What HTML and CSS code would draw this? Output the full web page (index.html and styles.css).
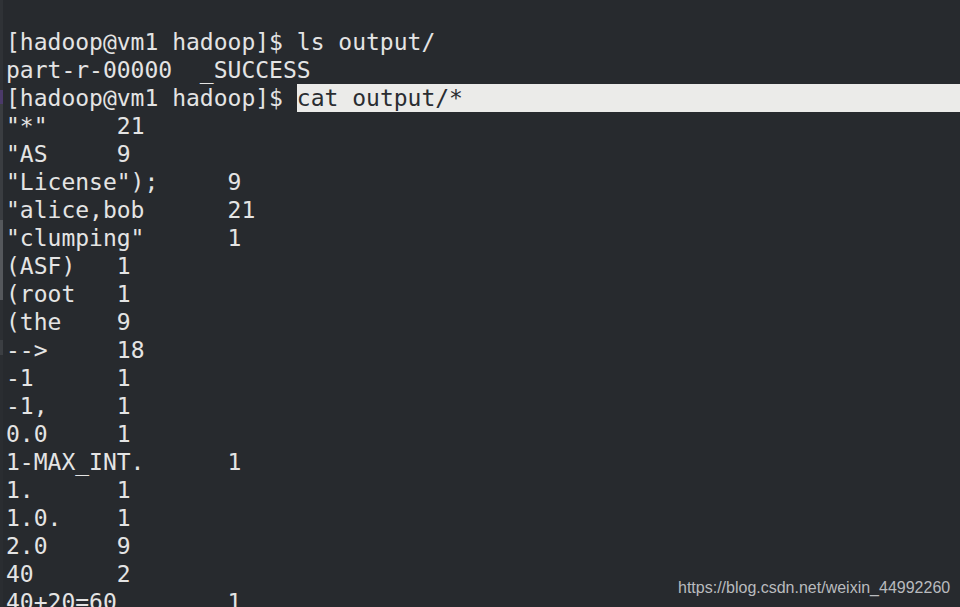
FILE: index.html
```html
<!DOCTYPE html>
<html>
<head>
<meta charset="utf-8">
<link rel="stylesheet" href="styles.css">
</head>
<body>
<div class="edge"></div>
<div class="term">
<div class="line">[hadoop@vm1 hadoop]$ ls output/</div>
<div class="line">part-r-00000  _SUCCESS</div>
<div class="line cmd"><span>[hadoop@vm1 hadoop]$ </span><span class="sel">cat output/*</span></div>
<div class="line">"*"	21</div>
<div class="line">"AS	9</div>
<div class="line">"License");	9</div>
<div class="line">"alice,bob	21</div>
<div class="line">"clumping"	1</div>
<div class="line">(ASF)	1</div>
<div class="line">(root	1</div>
<div class="line">(the	9</div>
<div class="line">--&gt;	18</div>
<div class="line">-1	1</div>
<div class="line">-1,	1</div>
<div class="line">0.0	1</div>
<div class="line">1-MAX_INT.	1</div>
<div class="line">1.	1</div>
<div class="line">1.0.	1</div>
<div class="line">2.0	9</div>
<div class="line">40	2</div>
<div class="line">40+20=60	1</div>
</div>
<div class="mark">https://blog.csdn.net/weixin_44992260</div>
</body>
</html>
```
FILE: styles.css
```css
html, body {
  margin: 0;
  padding: 0;
  height: 100%;
  overflow: hidden;
  background: #272a2e;
}
body {
  position: relative;
}
.edge {
  position: absolute;
  left: 0;
  top: 0;
  width: 3px;
  height: 100%;
  background: linear-gradient(to bottom,
    #2f3236 0, #2f3236 90px,
    #4b3a6a 90px, #4b3a6a 104px,
    #3a3d41 104px, #3a3d41 220px,
    #55585c 220px, #55585c 300px,
    #2c2f33 300px, #2c2f33 340px,
    #3b3e42 340px, #3b3e42 355px,
    #2a2d31 355px);
}
.term {
  padding: 28px 0 0 6px;
  font-family: "DejaVu Sans Mono", monospace;
  font-size: 23px;
  line-height: 28px;
  color: #e4e4e4;
}
.line {
  white-space: pre;
  tab-size: 8;
  height: 28px;
}
.cmd {
  display: flex;
}
.sel {
  flex: 1;
  background: #ebebe9;
  color: #2a2d31;
}
.mark {
  position: absolute;
  left: 678px;
  top: 577px;
  font-family: "Liberation Sans", Arial, sans-serif;
  font-size: 16px;
  line-height: 22px;
  color: #b9bbbe;
  white-space: nowrap;
}
```
